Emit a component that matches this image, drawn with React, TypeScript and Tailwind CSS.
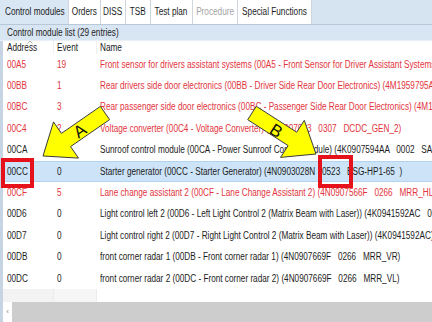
import React from "react";

type Row = { addr: string; ev: string; name: string; red?: boolean; sel?: boolean };

const rows: Row[] = [
  { addr: "00A5", ev: "19", name: "Front sensor for drivers assistant systems (00A5 - Front Sensor for Driver Assistant Systems)", red: true },
  { addr: "00BB", ev: "1", name: "Rear drivers side door electronics (00BB - Driver Side Rear Door Electronics) (4M1959795A   0012)", red: true },
  { addr: "00BC", ev: "3", name: "Rear passenger side door electronics (00BC - Passenger Side Rear Door Electronics) (4M1959795B)", red: true },
  { addr: "00C4", ev: "2", name: "Voltage converter (00C4 - Voltage Converter) (4N0907063   0307   DCDC_GEN_2)", red: true },
  { addr: "00CA", ev: "0", name: "Sunroof control module (00CA - Power Sunroof Control Module) (4K0907594AA   0002   SAD)" },
  { addr: "00CC", ev: "0", name: "Starter generator (00CC - Starter Generator) (4N0903028N   0523   BSG-HP1-65  )", sel: true },
  { addr: "00CF", ev: "5", name: "Lane change assistant 2 (00CF - Lane Change Assistant 2) (4N0907566F   0266   MRR_HL)", red: true },
  { addr: "00D6", ev: "0", name: "Light control left 2 (00D6 - Left Light Control 2 (Matrix Beam with Laser)) (4K0941592AC   0012)" },
  { addr: "00D7", ev: "0", name: "Light control right 2 (00D7 - Right Light Control 2 (Matrix Beam with Laser)) (4K0941592AC)" },
  { addr: "00DB", ev: "0", name: "front corner radar 1 (00DB - Front corner radar 1) (4N0907669F   0266   MRR_VR)" },
  { addr: "00DC", ev: "0", name: "front corner radar 2 (00DC - Front corner radar 2) (4N0907669F   0266   MRR_VL)" },
];

const tabs = [
  { label: "Control modules", w: "w-[68px]", active: true },
  { label: "Orders", w: "w-[32px]" },
  { label: "DISS", w: "w-[25px]" },
  { label: "TSB", w: "w-[25px]" },
  { label: "Test plan", w: "w-[42px]" },
  { label: "Procedure", w: "w-[45px]", muted: true },
  { label: "Special Functions", w: "w-[74px]" },
];

// text in the shot is squeezed horizontally, so every label gets a scale-x
function T({ children, center }: { children: React.ReactNode; center?: boolean }) {
  return (
    <span className={`inline-block whitespace-pre scale-x-[0.82] ${center ? "origin-center" : "origin-left"}`}>
      {children}
    </span>
  );
}

export default function App() {
  return (
    <div className="relative w-[432px] h-[322px] overflow-hidden bg-white font-['Liberation_Sans',Arial,sans-serif] text-[10px] leading-none text-[#1c1c1c] flex flex-col">
      {/* tab strip */}
      <div className="flex h-[25px] shrink-0 bg-[#d6e3f0] border-b border-[#b8c8d8]">
        {tabs.map((t) => (
          <div
            key={t.label}
            className={`${t.w} flex items-center ${
              t.active ? "bg-[#d9e6f3] pl-[5px]" : "bg-white justify-center border-l border-[#cfd6de]"
            } ${t.muted ? "text-[#a3a3a3]" : ""}`}
          >
            <T center={!t.active}>{t.label}</T>
          </div>
        ))}
        <div className="flex-1 border-l border-[#cfd6de]" />
      </div>

      {/* group header */}
      <div className="h-[16px] shrink-0 bg-[#d8e5f2] border-b border-[#e8eff6] flex items-center pl-[7px]">
        <T>Control module list (29 entries)</T>
      </div>

      {/* list */}
      <div className="flex-1 flex flex-col border-l-[3px] border-[#c6d4e4]">
        <div className="h-[13px] shrink-0 flex items-center relative">
          <div className="w-[51px] pl-[4px] border-r border-[#f0f0f0] h-full flex items-center">
            <T>Address</T>
          </div>
          <div className="w-[43px] pl-[3px] border-r border-[#f0f0f0] h-full flex items-center">
            <T>Event</T>
          </div>
          <div className="flex-1 pl-[3px] h-full flex items-center">
            <T>Name</T>
          </div>
          <svg className="absolute left-[24px] top-[-1px]" width="6" height="4" viewBox="0 0 6 4">
            <path d="M0.5 3.5 L3 1 L5.5 3.5" fill="none" stroke="#9a9a9a" strokeWidth="0.8" />
          </svg>
        </div>

        {rows.map((r) => (
          <div
            key={r.addr}
            className={`h-[21.4px] shrink-0 flex items-center overflow-hidden ${
              r.sel ? "bg-[#cde3f7] border-y border-[#b3d4f0]" : ""
            } ${r.red ? "text-[#e3343d]" : ""}`}
          >
            <div className="w-[51px] shrink-0 pl-[4px]">
              <T>{r.addr}</T>
            </div>
            <div className="w-[43px] shrink-0 pl-[3px]">
              <T>{r.ev}</T>
            </div>
            <div className="flex-1 pl-[3px] whitespace-nowrap">
              <T>{r.name}</T>
            </div>
          </div>
        ))}

        <div className="flex-1 flex">
          <div className="w-[51px] bg-[#f3f3f3] border-r border-[#ececec]" />
          <div className="w-[43px] bg-[#f6f6f6] border-r border-[#ececec]" />
          <div className="flex-1" />
        </div>

        {/* horizontal scrollbar */}
        <div className="h-[20px] shrink-0 flex">
          <div className="w-[9px] flex items-center justify-center text-[8px] text-[#8a8a8a]">‹</div>
          <div className="flex-1 bg-[#cdcdcd]" />
        </div>
      </div>

      {/* annotation overlay */}
      <svg className="absolute inset-0 pointer-events-none" width="432" height="322" viewBox="0 0 432 322">
        <polygon
          points="100.4,106.4 109.6,119.6 70.6,146.6 78.5,158.1 43,156 53.5,121.9 61.4,133.4"
          fill="#ffff00"
          stroke="#3a3a3a"
          strokeWidth="1"
          strokeLinejoin="round"
        />
        <text
          x="80"
          y="131"
          fontSize="17"
          fontFamily="Liberation Sans, Arial, sans-serif"
          textAnchor="middle"
          dominantBaseline="central"
          transform="rotate(-35 80 131)"
          fill="#111"
        >
          A
        </text>
        <polygon
          points="256.3,106.3 247.7,119.7 288.1,145.6 280.5,157.4 316,154 304.3,120.4 296.7,132.2"
          fill="#ffff00"
          stroke="#3a3a3a"
          strokeWidth="1"
          strokeLinejoin="round"
        />
        <text
          x="276"
          y="131"
          fontSize="17"
          fontFamily="Liberation Sans, Arial, sans-serif"
          textAnchor="middle"
          dominantBaseline="central"
          transform="rotate(33 276 131)"
          fill="#111"
        >
          B
        </text>
        <rect x="3" y="160" width="29" height="26" fill="none" stroke="#e5121b" strokeWidth="4" />
        <rect x="320" y="157" width="31" height="29" fill="none" stroke="#e5121b" strokeWidth="4" />
      </svg>
    </div>
  );
}
